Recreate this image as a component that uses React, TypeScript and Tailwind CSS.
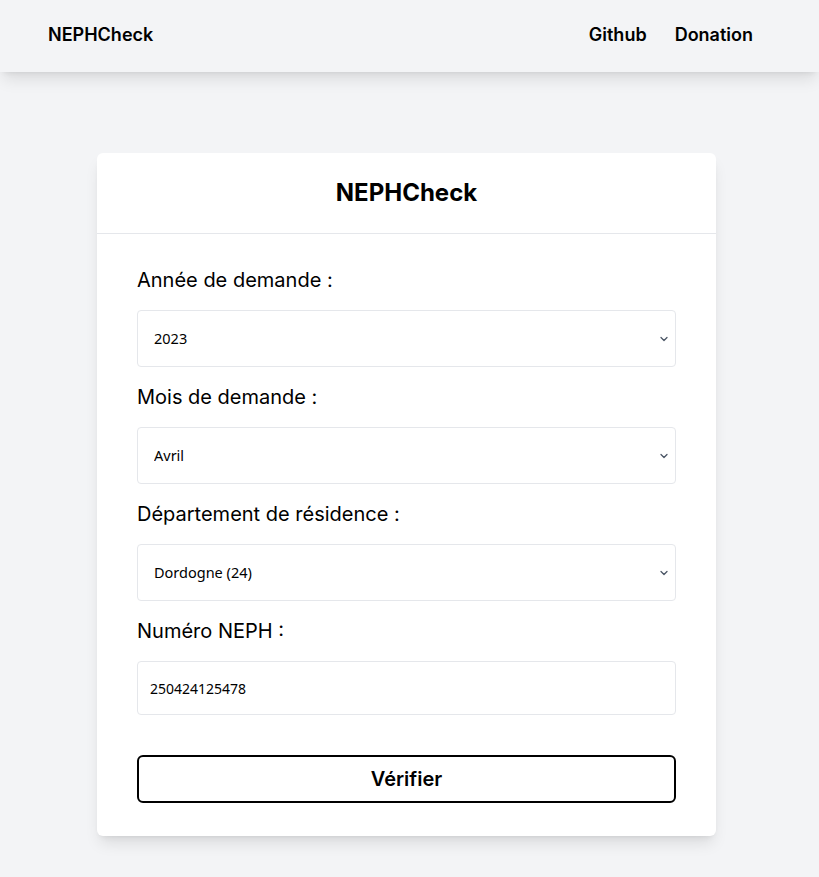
import { ChevronDown } from 'lucide-react'

const FIELDS = [
  { id: 'annee', label: 'Année de demande :', value: '2023', options: ['2021', '2022', '2023', '2024'] },
  { id: 'mois', label: 'Mois de demande :', value: 'Avril', options: ['Janvier', 'Février', 'Mars', 'Avril', 'Mai'] },
  { id: 'dep', label: 'Département de résidence :', value: 'Dordogne (24)', options: ['Dordogne (24)', 'Gironde (33)'] },
]

function SelectField({ id, label, value, options }: { id: string; label: string; value: string; options: string[] }) {
  return (
    <div className="flex flex-col">
      <label htmlFor={id} className="text-xl font-normal leading-7 text-black mb-4">
        {label}
      </label>
      <div className="relative mb-4">
        <select
          id={id}
          defaultValue={value}
          className="w-full h-[57px] appearance-none bg-white border border-gray-200 rounded pl-4 pr-8 text-[14.5px] text-black font-['Noto_Sans',sans-serif] outline-none"
        >
          {options.map((o) => (
            <option key={o}>{o}</option>
          ))}
        </select>
        <ChevronDown className="absolute right-[6px] top-1/2 -translate-y-1/2 w-3 h-3 text-gray-600 pointer-events-none" strokeWidth={2.5} />
      </div>
    </div>
  )
}

export default function App() {
  return (
    <div className="min-h-[877px] bg-gray-100 font-['Inter',sans-serif] text-black">
      <header className="h-[72px] bg-gray-100 shadow-lg flex items-center justify-between pl-12 pr-[66px] pb-[2px]">
        <span className="font-semibold text-lg">NEPHCheck</span>
        <nav className="flex items-center gap-7 font-semibold text-lg">
          <a href="#">Github</a>
          <a href="#">Donation</a>
        </nav>
      </header>

      <main className="pt-[81px] pb-10 pr-[6px] flex justify-center">
        <div className="w-[619px] bg-white rounded-md shadow-lg">
          <div className="h-[81px] flex items-center justify-center border-b border-gray-200">
            <h1 className="text-2xl font-bold">NEPHCheck</h1>
          </div>
          <form className="px-10 pt-8 pb-[33px] flex flex-col">
            {FIELDS.map((f) => (
              <SelectField key={f.id} {...f} />
            ))}
            <label htmlFor="neph" className="text-xl font-normal leading-7 mb-4">
              Numéro NEPH :
            </label>
            <input
              id="neph"
              defaultValue="250424125478"
              className="h-[54px] border border-gray-200 rounded px-3 text-sm text-black font-['Noto_Sans',sans-serif] outline-none"
            />
            <button
              type="button"
              className="mt-10 h-12 border-2 border-black rounded-md text-xl font-semibold"
            >
              Vérifier
            </button>
          </form>
        </div>
      </main>
    </div>
  )
}
